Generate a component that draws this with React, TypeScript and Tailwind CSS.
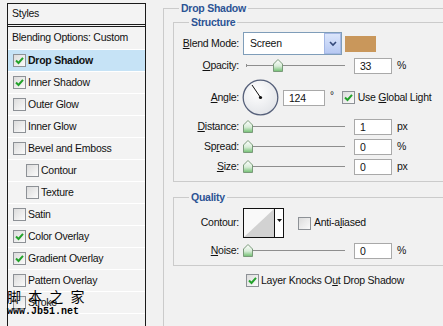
import React from "react";

const Check = ({ checked = false }: { checked?: boolean }) => (
  <span className="w-[13px] h-[13px] border border-[#8d9196] bg-gradient-to-br from-[#dcdcdc] to-[#fbfbfb] flex items-center justify-center shrink-0">
    {checked && (
      <svg width="9" height="9" viewBox="0 0 9 9">
        <path d="M1 4.5 L3.5 7 L8 1.8" fill="none" stroke="#22a22a" strokeWidth="2" />
      </svg>
    )}
  </span>
);

const U = ({ c }: { c: string }) => <span className="underline underline-offset-[1px]">{c}</span>;

const Field = ({ value, w = 38 }: { value: string; w?: number }) => (
  <div
    className={`${w === 38 ? "w-[38px]" : "w-[42px]"} h-[16px] border border-[#a9a9a9] bg-white pl-[5px] leading-[14px] shrink-0`}
  >
    {value}
  </div>
);

const Slider = ({ pos }: { pos: number }) => (
  <div className="relative w-[102px] h-[17px] shrink-0">
    <div className="absolute left-[3px] right-0 top-[8px] h-px bg-[#8e8e8e]" />
    <div className="absolute left-[3px] top-[7px] w-px h-[3px] bg-[#8e8e8e]" />
    <svg className="absolute top-[2px]" style={{ left: pos }} width="10" height="13" viewBox="0 0 10 13">
      <defs>
        <linearGradient id="tg" x1="0" y1="0" x2="0" y2="1">
          <stop offset="0" stopColor="#ffffff" />
          <stop offset="0.55" stopColor="#d8ecd8" />
          <stop offset="1" stopColor="#6fbf6f" />
        </linearGradient>
      </defs>
      <path d="M0.5 5 L5 0.5 L9.5 5 V12.5 H0.5 Z" fill="url(#tg)" stroke="#7a9a7a" />
    </svg>
  </div>
);

const Label = ({ children }: { children: React.ReactNode }) => (
  <div className="w-[65px] text-right shrink-0 mr-[4px]">{children}</div>
);

const Legend = ({ children }: { children: React.ReactNode }) => (
  <legend className="ml-[15px] px-[2px] leading-[14px] font-bold text-[#2b5394]">{children}</legend>
);

const rows = [
  { label: "Drop Shadow", checked: true, selected: true },
  { label: "Inner Shadow", checked: true },
  { label: "Outer Glow" },
  { label: "Inner Glow" },
  { label: "Bevel and Emboss" },
  { label: "Contour", indent: true },
  { label: "Texture", indent: true },
  { label: "Satin" },
  { label: "Color Overlay", checked: true },
  { label: "Gradient Overlay", checked: true },
  { label: "Pattern Overlay" },
  { label: "Stroke" },
];

export default function App() {
  return (
    <div className="relative w-[443px] h-[326px] overflow-hidden bg-[#f1f1f1] flex items-start font-['Liberation_Sans',Arial,sans-serif] text-[10.5px] tracking-[-0.25px] text-[#111]">
      {/* Left styles list */}
      <div className="ml-[7px] mt-[3px] w-[139px] h-[340px] border border-b-0 border-[#1a1a1a] bg-[#f3f3f3] flex flex-col shrink-0">
        <div className="h-[23px] pl-[4px] flex items-center border-b-[3px] border-double border-[#1a1a1a]">Styles</div>
        <div className="h-[23px] pl-[4px] flex items-center border-b border-white">Blending Options: Custom</div>
        {rows.map((r) => (
          <div
            key={r.label}
            className={`h-[22px] flex items-center gap-[2px] border-b border-white ${r.indent ? "pl-[18px]" : "pl-[5px]"} ${
              r.selected ? "bg-[#c6e3f6] font-bold" : ""
            }`}
          >
            <Check checked={r.checked} />
            <span>{r.label}</span>
          </div>
        ))}
      </div>

      {/* Right panel */}
      <fieldset className="ml-[17px] mt-[1px] w-[300px] h-[340px] border border-[#cbcbcb] shrink-0">
        <Legend>Drop Shadow</Legend>
        <div className="pl-[9px]">
          <fieldset className="w-[290px] border border-[#cbcbcb]">
            <Legend>Structure</Legend>
            <div className="pt-[3px] pb-[6px] flex flex-col">
              <div className="h-[23px] flex items-center">
                <Label>
                  <U c="B" />lend Mode:
                </Label>
                <div className="w-[99px] h-[23px] border border-[#7f9db9] bg-white flex items-center shrink-0">
                  <span className="pl-[6px] flex-1">Screen</span>
                  <div className="w-[17px] h-[21px] bg-gradient-to-b from-[#dbe5fb] to-[#b7c9f2] border border-[#a4b7e4] flex items-center justify-center">
                    <svg width="8" height="6" viewBox="0 0 8 6">
                      <path d="M1 1 L4 4 L7 1" fill="none" stroke="#34497a" strokeWidth="1.6" />
                    </svg>
                  </div>
                </div>
                <div className="ml-[3px] w-[31px] h-[16px] bg-[#c9975b]" />
              </div>

              <div className="mt-[2px] h-[17px] flex items-center">
                <Label>
                  <U c="O" />pacity:
                </Label>
                <Slider pos={30} />
                <div className="ml-[9px]">
                  <Field value="33" />
                </div>
                <span className="ml-[5px]">%</span>
              </div>

              <div className="mt-[5px] h-[37px] flex items-center">
                <Label>
                  <U c="A" />ngle:
                </Label>
                <svg width="37" height="37" viewBox="0 0 37 37" className="shrink-0 -ml-[1px]">
                  <defs>
                    <radialGradient id="dg" cx="0.4" cy="0.35" r="0.7">
                      <stop offset="0" stopColor="#ffffff" />
                      <stop offset="1" stopColor="#e2e4e8" />
                    </radialGradient>
                  </defs>
                  <circle cx="18.5" cy="18.5" r="17.3" fill="url(#dg)" stroke="#56607a" strokeWidth="1.3" />
                  <line x1="18.5" y1="18.5" x2="10" y2="6" stroke="#111" strokeWidth="1" />
                  <circle cx="18.5" cy="18.5" r="1.6" fill="#111" />
                </svg>
                <div className="ml-[4px]">
                  <Field value="124" w={42} />
                </div>
                <span className="ml-[5px] self-start mt-[9px] text-[10px]">°</span>
                <div className="ml-[8px] flex items-center gap-[3px]">
                  <Check checked />
                  <span>
                    Use <U c="G" />lobal Light
                  </span>
                </div>
              </div>

              <div className="mt-[2px] h-[17px] flex items-center">
                <Label>
                  <U c="D" />istance:
                </Label>
                <Slider pos={0} />
                <div className="ml-[9px]">
                  <Field value="1" />
                </div>
                <span className="ml-[5px]">px</span>
              </div>

              <div className="mt-[3px] h-[17px] flex items-center">
                <Label>
                  Sp<U c="r" />ead:
                </Label>
                <Slider pos={0} />
                <div className="ml-[9px]">
                  <Field value="0" />
                </div>
                <span className="ml-[5px]">%</span>
              </div>

              <div className="mt-[3px] h-[17px] flex items-center">
                <Label>
                  <U c="S" />ize:
                </Label>
                <Slider pos={0} />
                <div className="ml-[9px]">
                  <Field value="0" />
                </div>
                <span className="ml-[5px]">px</span>
              </div>
            </div>
          </fieldset>

          <fieldset className="mt-[8px] w-[290px] border border-[#cbcbcb]">
            <Legend>Quality</Legend>
            <div className="pt-[4px] pb-[6px] flex flex-col">
              <div className="h-[30px] flex items-center">
                <Label>Contour:</Label>
                <div className="w-[41px] h-[30px] border border-[#111] bg-white flex shrink-0">
                  <svg width="30" height="28" viewBox="0 0 30 28" className="shrink-0">
                    <rect width="30" height="28" fill="#f9f9f9" />
                    <path d="M0 28 L30 0 L30 28 Z" fill="#d2d2d2" />
                  </svg>
                  <div className="flex-1 border-l border-[#111] flex justify-center pt-[10px]">
                    <svg width="5" height="3" viewBox="0 0 5 3">
                      <path d="M0 0 H5 L2.5 3 Z" fill="#111" />
                    </svg>
                  </div>
                </div>
                <div className="ml-[14px] flex items-center gap-[3px]">
                  <Check />
                  <span>
                    Anti-a<U c="l" />iased
                  </span>
                </div>
              </div>

              <div className="mt-[4px] h-[17px] flex items-center">
                <Label>
                  <U c="N" />oise:
                </Label>
                <Slider pos={0} />
                <div className="ml-[9px]">
                  <Field value="0" />
                </div>
                <span className="ml-[5px]">%</span>
              </div>
            </div>
          </fieldset>

          <div className="mt-[7px] pl-[73px] flex items-center gap-[2px]">
            <Check checked />
            <span>
              Layer Knocks O<U c="u" />t Drop Shadow
            </span>
          </div>
        </div>
      </fieldset>

      {/* watermark */}
      <div className="absolute left-[7px] top-[288px] text-[14px] leading-[16px] text-black font-['Noto_Sans_CJK_SC',sans-serif] tracking-[2px]">
        脚 本 之 家
      </div>
      <div className="absolute left-[7px] top-[306px] text-[10px] leading-[12px] tracking-normal text-black font-['Liberation_Mono',monospace] font-bold">
        www.Jb51.net
      </div>
    </div>
  );
}
